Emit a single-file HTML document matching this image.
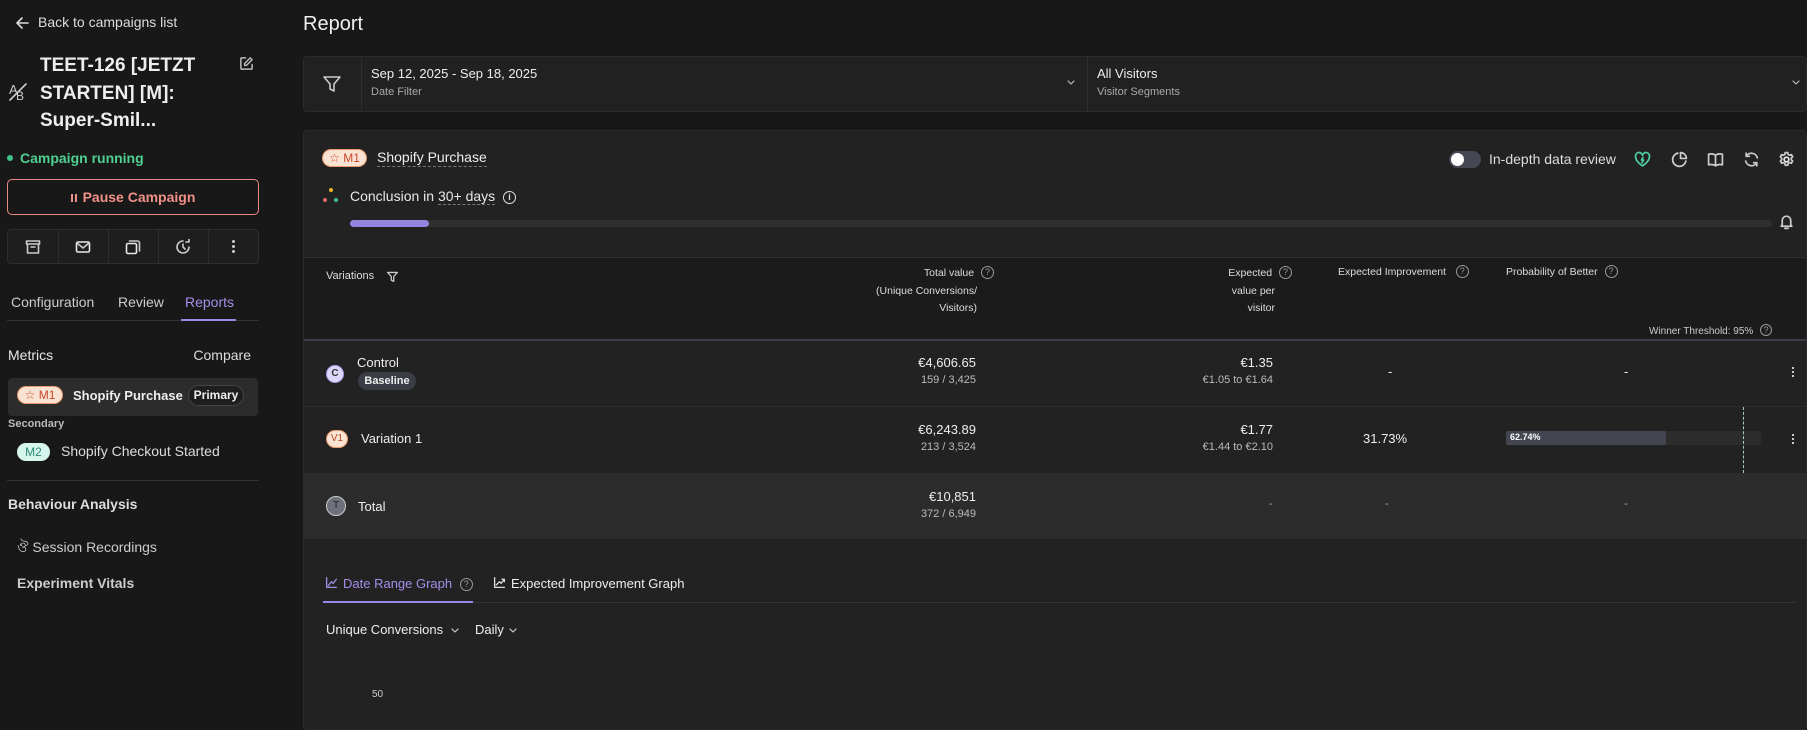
<!DOCTYPE html>
<html><head><meta charset="utf-8"><style>
*{box-sizing:border-box;margin:0;padding:0}
body{width:1807px;height:698px;overflow:hidden;background:#181818;font-family:"Liberation Sans",sans-serif;color:#e8e8e8;position:relative;font-size:14px}
.a{position:absolute;white-space:nowrap}
svg{position:absolute;fill:none;stroke:currentColor;stroke-width:1.6;stroke-linecap:round;stroke-linejoin:round}
.q{display:inline-block;width:13px;height:13px;border:1px solid #999;border-radius:50%;font-size:9px;text-align:center;line-height:11px;color:#999;vertical-align:1px;margin-left:4px}
.r{text-align:right}
</style></head><body>
<!-- sidebar -->
<svg style="left:15px;top:15px" width="16" height="16" viewBox="0 0 16 16"><path d="M13 8H3M7 3L2 8l5 5" color="#ddd"/></svg>
<div class="a" style="left:38px;top:14px;font-size:14px;color:#ddd">Back to campaigns list</div>
<div class="a" style="left:9px;top:82px;font-size:13px;color:#ccc">A</div>
<svg style="left:8px;top:82px" width="20" height="20" viewBox="0 0 20 20"><path d="M2 18L18 2" color="#ccc"/></svg>
<div class="a" style="left:16px;top:89px;font-size:12px;color:#ccc">B</div>
<div class="a" style="left:40px;top:52px;font-size:19px;font-weight:bold;line-height:27.5px;color:#eee">TEET-126 [JETZT<br>STARTEN] [M]:<br>Super-Smil...</div>
<svg style="left:239px;top:56px" width="15" height="15" viewBox="0 0 16 16"><path d="M7 2H3a1 1 0 0 0-1 1v10a1 1 0 0 0 1 1h10a1 1 0 0 0 1-1V9M12 2l2 2-6 6H6V8z" color="#bbb"/></svg>
<div class="a" style="left:7px;top:155px;width:6px;height:6px;border-radius:50%;background:#3cc587"></div>
<div class="a" style="left:20px;top:150px;font-size:14px;font-weight:bold;color:#4fd08f">Campaign running</div>
<div class="a" style="left:7px;top:179px;width:252px;height:36px;border:1px solid #e88a80;border-radius:5px;color:#f09086;font-size:14px;font-weight:bold;text-align:center;line-height:34px"><span style="display:inline-block;width:2px;height:8px;background:#f09086;margin-right:2px"></span><span style="display:inline-block;width:2px;height:8px;background:#f09086;margin-right:6px"></span>Pause Campaign</div>
<div class="a" style="left:7px;top:229px;width:252px;height:35px;border:1px solid #2e2e2e;border-radius:4px;background:#1e1e1e"></div>
<div class="a" style="left:58px;top:230px;width:1px;height:33px;background:#2e2e2e"></div>
<div class="a" style="left:108px;top:230px;width:1px;height:33px;background:#2e2e2e"></div>
<div class="a" style="left:158px;top:230px;width:1px;height:33px;background:#2e2e2e"></div>
<div class="a" style="left:208px;top:230px;width:1px;height:33px;background:#2e2e2e"></div>
<svg style="left:25px;top:239px" width="16" height="16" viewBox="0 0 16 16"><path d="M1.5 2h13v3h-13zM2.5 5v9h11V5M6 8h4" color="#ccc"/></svg>
<svg style="left:75px;top:239px" width="16" height="16" viewBox="0 0 16 16"><rect x="1.5" y="3" width="13" height="10" rx="1.5"/><path d="M2 4l6 5 6-5" color="#ccc"/></svg>
<svg style="left:125px;top:239px" width="16" height="16" viewBox="0 0 16 16"><rect x="1.5" y="4.5" width="10" height="10" rx="1.5"/><path d="M4.5 2h8a2 2 0 0 1 2 2v8" color="#ccc"/></svg>
<svg style="left:175px;top:239px" width="16" height="16" viewBox="0 0 16 16"><path d="M14 8A6 6 0 1 1 8 2M8 5v3l2 2M11 3l3 0 0-3" color="#ccc"/></svg>
<div class="a" style="left:232px;top:240px;width:3px;height:3px;border-radius:50%;background:#ccc"></div>
<div class="a" style="left:232px;top:245px;width:3px;height:3px;border-radius:50%;background:#ccc"></div>
<div class="a" style="left:232px;top:250px;width:3px;height:3px;border-radius:50%;background:#ccc"></div>
<div class="a" style="left:11px;top:294px;font-size:14px;color:#ccc">Configuration</div>
<div class="a" style="left:118px;top:294px;font-size:14px;color:#ccc">Review</div>
<div class="a" style="left:185px;top:294px;font-size:14px;color:#a58ee8">Reports</div>
<div class="a" style="left:7px;top:320px;width:252px;height:1px;background:#333"></div>
<div class="a" style="left:181px;top:319px;width:55px;height:2px;background:#9b87e6"></div>
<div class="a" style="left:8px;top:347px;font-size:14px;color:#e8e8e8">Metrics</div>
<div class="a r" style="left:150px;top:347px;width:101px;font-size:14px;color:#ddd">Compare</div>
<div class="a" style="left:8px;top:378px;width:250px;height:38px;background:#2c2c2c;border-radius:4px"></div>
<div class="a" style="left:17px;top:386px;width:46px;height:18px;border-radius:9px;background:#fbe3d4;border:1px solid #e99a6c;color:#c8482e;font-size:12px;text-align:center;line-height:16px">☆ M1</div>
<div class="a" style="left:73px;top:388px;font-size:13px;font-weight:bold;color:#eee">Shopify Purchase</div>
<div class="a" style="left:188px;top:385px;width:56px;height:21px;border-radius:11px;background:#1e1e1e;border:1px solid #444;color:#eee;font-size:12px;font-weight:bold;text-align:center;line-height:19px">Primary</div>
<div class="a" style="left:8px;top:418px;font-size:11px;color:#bbb;font-weight:bold">Secondary</div>
<div class="a" style="left:17px;top:443px;width:33px;height:18px;border-radius:9px;background:#d6f5ec;color:#2a8a72;font-size:12px;text-align:center;line-height:18px">M2</div>
<div class="a" style="left:61px;top:443px;font-size:14px;color:#ddd">Shopify Checkout Started</div>
<div class="a" style="left:7px;top:480px;width:252px;height:1px;background:#333"></div>
<div class="a" style="left:8px;top:496px;font-size:14px;font-weight:bold;color:#ddd">Behaviour Analysis</div>
<div class="a" style="left:17px;top:536px;font-size:14px;color:#ccc">ঔ Session Recordings</div>
<div class="a" style="left:17px;top:575px;font-size:14px;font-weight:bold;color:#ccc">Experiment Vitals</div>
<!-- main -->
<div class="a" style="left:303px;top:13px;font-size:20px;color:#f0f0f0">Report</div>
<div class="a" style="left:303px;top:56px;width:1504px;height:56px;background:#212121;border:1px solid #2c2c2c;border-radius:4px"></div>
<div class="a" style="left:361px;top:57px;width:1px;height:54px;background:#2e2e2e"></div>
<div class="a" style="left:1087px;top:57px;width:1px;height:54px;background:#2e2e2e"></div>
<svg style="left:322px;top:74px" width="20" height="20" viewBox="0 0 20 20"><path d="M2 3h16l-6 7v7l-4-2v-5z" color="#ccc"/></svg>
<div class="a" style="left:371px;top:66px;font-size:13px;color:#eee">Sep 12, 2025 - Sep 18, 2025</div>
<div class="a" style="left:371px;top:86px;font-size:11px;color:#aaa">Date Filter</div>
<svg style="left:1067px;top:80px" width="8" height="6" viewBox="0 0 8 6"><path d="M1 1l3 3 3-3" color="#bbb" style="stroke-width:1.2"/></svg>
<div class="a" style="left:1097px;top:66px;font-size:13px;color:#eee">All Visitors</div>
<div class="a" style="left:1097px;top:86px;font-size:11px;color:#aaa">Visitor Segments</div>
<svg style="left:1792px;top:80px" width="8" height="6" viewBox="0 0 8 6"><path d="M1 1l3 3 3-3" color="#bbb" style="stroke-width:1.2"/></svg>
<!-- card -->
<div class="a" style="left:303px;top:130px;width:1504px;height:600px;background:#222;border:1px solid #2c2c2c;border-radius:4px"></div>
<div class="a" style="left:322px;top:149px;width:45px;height:18px;border-radius:9px;background:#fbe3d4;border:1px solid #e99a6c;color:#c8482e;font-size:12px;text-align:center;line-height:16px">☆ M1</div>
<div class="a" style="left:377px;top:149px;font-size:14px;color:#eee;border-bottom:1px dashed #777;padding-bottom:1px">Shopify Purchase</div>
<div class="a" style="left:1449px;top:151px;width:32px;height:17px;border-radius:9px;background:#454852"></div>
<div class="a" style="left:1451px;top:153px;width:13px;height:13px;border-radius:50%;background:#fff"></div>
<div class="a" style="left:1489px;top:151px;font-size:14px;color:#ddd">In-depth data review</div>
<svg style="left:1634px;top:151px" width="17" height="17" viewBox="0 0 16 16"><path d="M8 14S1.5 10 1.5 5.5A3.3 3.3 0 0 1 8 4a3.3 3.3 0 0 1 6.5 1.5C14.5 10 8 14 8 14zM8.5 6L7 8.5h2L7.5 11" color="#4fd0a0"/></svg>
<svg style="left:1671px;top:151px" width="17" height="17" viewBox="0 0 16 16"><path d="M14 9.5A6.3 6.3 0 1 1 6.5 2M9 1.5a5.5 5.5 0 0 1 5.5 5.5H9z" color="#ccc"/></svg>
<svg style="left:1707px;top:151px" width="17" height="17" viewBox="0 0 16 16"><path d="M8 4v10M8 4C6 2.5 3.5 2.5 1.5 3v10c2-.5 4.5-.5 6.5 1 2-1.5 4.5-1.5 6.5-1V3c-2-.5-4.5-.5-6.5 1" color="#ccc"/></svg>
<svg style="left:1743px;top:151px" width="17" height="17" viewBox="0 0 16 16"><path d="M13.5 6.5A5.7 5.7 0 0 0 3 5M2.5 9.5A5.7 5.7 0 0 0 13 11M3 2v3h3M13 14v-3h-3" color="#ccc"/></svg>
<svg style="left:1778px;top:151px" width="17" height="17" viewBox="0 0 16 16"><circle cx="8" cy="8" r="2.2"/><path d="M6.8 1.5h2.4l.4 1.8 1.3.7 1.7-.6 1.2 2-1.3 1.3v1.5l1.3 1.3-1.2 2-1.7-.6-1.3.7-.4 1.8H6.8l-.4-1.8-1.3-.7-1.7.6-1.2-2 1.3-1.3V6.7L2.2 5.4l1.2-2 1.7.6 1.3-.7z" color="#ccc"/></svg>
<div class="a" style="left:329px;top:188px;width:4px;height:4px;border-radius:50%;background:#f0b429"></div>
<div class="a" style="left:323px;top:198px;width:4px;height:4px;border-radius:50%;background:#e46a6a"></div>
<div class="a" style="left:334px;top:198px;width:4px;height:4px;border-radius:50%;background:#3cc587"></div>
<div class="a" style="left:350px;top:188px;font-size:14px;color:#e8e8e8">Conclusion in <span style="border-bottom:1px dashed #777">30+ days</span> <span class="q" style="border-color:#ddd;color:#ddd;font-weight:bold">i</span></div>
<div class="a" style="left:350px;top:220px;width:1422px;height:7px;border-radius:4px;background:#2f2f2f"></div>
<div class="a" style="left:350px;top:220px;width:79px;height:7px;border-radius:4px;background:#9483df"></div>
<svg style="left:1778px;top:213px" width="17" height="17" viewBox="0 0 16 16"><path d="M4 11V7a4 4 0 0 1 8 0v4l1 1.5H3zM6.5 14.5h3" color="#ccc"/></svg>
<!-- table header -->
<div class="a" style="left:304px;top:257px;width:1502px;height:83px;background:#1b1b1b;border-top:1px solid #2e2e2e"></div>
<div class="a" style="left:326px;top:270px;font-size:11px;color:#ddd">Variations</div>
<svg style="left:386px;top:270px" width="13" height="13" viewBox="0 0 16 16"><path d="M2 3h12l-4.5 5v6l-3-1.5V8z" color="#ccc"/></svg>
<div class="a r" style="left:800px;top:265px;width:194px;font-size:10.5px;color:#ddd;line-height:17.5px">Total value <span class="q">?</span><br>(Unique Conversions/<span style="display:inline-block;width:17px"></span><br>Visitors)<span style="display:inline-block;width:17px"></span></div>
<div class="a r" style="left:1150px;top:265px;width:142px;font-size:10.5px;color:#ddd;line-height:17.5px">Expected <span class="q">?</span><br>value per<span style="display:inline-block;width:17px"></span><br>visitor<span style="display:inline-block;width:17px"></span></div>
<div class="a" style="left:1338px;top:265px;font-size:10.5px;color:#ddd">Expected Improvement &nbsp;<span class="q">?</span></div>
<div class="a" style="left:1506px;top:265px;font-size:10.5px;color:#ddd">Probability of Better <span class="q">?</span></div>
<div class="a" style="left:1649px;top:324px;font-size:10px;color:#ccc">Winner Threshold: 95% <span class="q" style="width:12px;height:12px;line-height:10px">?</span></div>
<div class="a" style="left:304px;top:339px;width:1502px;height:2px;background:#3a3d45"></div>
<!-- rows -->
<div class="a" style="left:304px;top:406px;width:1502px;height:1px;background:#2e2e2e"></div>
<div class="a" style="left:304px;top:473px;width:1502px;height:66px;background:#2c2c2c"></div>
<div class="a" style="left:326px;top:365px;width:18px;height:18px;border-radius:50%;background:#ddd6fb;border:1px solid #a99be8;color:#333;font-size:10px;font-weight:bold;text-align:center;line-height:16px">C</div>
<div class="a" style="left:357px;top:355px;font-size:13px;color:#eee">Control</div>
<div class="a" style="left:358px;top:372px;width:58px;height:18px;border-radius:9px;background:#3a3d45;color:#eee;font-size:11px;font-weight:bold;text-align:center;line-height:18px">Baseline</div>
<div class="a r" style="left:800px;top:355px;width:176px;font-size:13px;color:#eee">€4,606.65</div>
<div class="a r" style="left:800px;top:374px;width:176px;font-size:11px;color:#bbb">159 / 3,425</div>
<div class="a r" style="left:1100px;top:355px;width:173px;font-size:13px;color:#eee">€1.35</div>
<div class="a r" style="left:1100px;top:374px;width:173px;font-size:11px;color:#bbb">€1.05 to €1.64</div>
<div class="a" style="left:1388px;top:364px;font-size:13px;color:#eee">-</div>
<div class="a" style="left:1624px;top:364px;font-size:13px;color:#eee">-</div>
<div class="a" style="left:1792px;top:367px;width:2px;height:2px;background:#ccc"></div>
<div class="a" style="left:1792px;top:371px;width:2px;height:2px;background:#ccc"></div>
<div class="a" style="left:1792px;top:375px;width:2px;height:2px;background:#ccc"></div>

<div class="a" style="left:326px;top:430px;width:22px;height:18px;border-radius:9px;background:#fbe3d4;border:1px solid #e99a6c;color:#b54a24;font-size:10px;text-align:center;line-height:16px">V1</div>
<div class="a" style="left:361px;top:431px;font-size:13px;color:#eee">Variation 1</div>
<div class="a r" style="left:800px;top:422px;width:176px;font-size:13px;color:#eee">€6,243.89</div>
<div class="a r" style="left:800px;top:441px;width:176px;font-size:11px;color:#bbb">213 / 3,524</div>
<div class="a r" style="left:1100px;top:422px;width:173px;font-size:13px;color:#eee">€1.77</div>
<div class="a r" style="left:1100px;top:441px;width:173px;font-size:11px;color:#bbb">€1.44 to €2.10</div>
<div class="a" style="left:1363px;top:431px;font-size:13px;color:#eee">31.73%</div>
<div class="a" style="left:1506px;top:431px;width:255px;height:14px;background:#2c2c2c;border-radius:2px"></div>
<div class="a" style="left:1506px;top:431px;width:160px;height:14px;background:#434650;border-radius:2px"></div>
<div class="a" style="left:1510px;top:432px;font-size:9px;font-weight:bold;color:#fff">62.74%</div>
<div class="a" style="left:1743px;top:407px;height:66px;border-left:1px dashed #9fcfc0"></div>
<div class="a" style="left:1792px;top:434px;width:2px;height:2px;background:#ccc"></div>
<div class="a" style="left:1792px;top:438px;width:2px;height:2px;background:#ccc"></div>
<div class="a" style="left:1792px;top:442px;width:2px;height:2px;background:#ccc"></div>

<div class="a" style="left:326px;top:496px;width:20px;height:20px;border-radius:50%;background:#6e717a;border:1px solid #ccc;color:#222;font-size:10px;text-align:center;line-height:18px">T</div>
<div class="a" style="left:358px;top:499px;font-size:13px;color:#eee">Total</div>
<div class="a r" style="left:800px;top:489px;width:176px;font-size:13px;color:#eee">€10,851</div>
<div class="a r" style="left:800px;top:508px;width:176px;font-size:11px;color:#bbb">372 / 6,949</div>
<div class="a" style="left:1269px;top:498px;font-size:11px;color:#aaa">-</div>
<div class="a" style="left:1385px;top:498px;font-size:11px;color:#aaa">-</div>
<div class="a" style="left:1624px;top:498px;font-size:11px;color:#aaa">-</div>
<!-- graph tabs -->
<div class="a" style="left:323px;top:602px;width:1473px;height:1px;background:#333"></div>
<div class="a" style="left:323px;top:601px;width:150px;height:2px;background:#9b87e6"></div>
<svg style="left:325px;top:576px" width="13" height="13" viewBox="0 0 16 16"><path d="M2 2v12h12M4 12l4-5 2 2 4-5" color="#a58ee8"/></svg>
<div class="a" style="left:343px;top:576px;font-size:13px;color:#a58ee8">Date Range Graph <span class="q">?</span></div>
<svg style="left:493px;top:576px" width="13" height="13" viewBox="0 0 16 16"><path d="M2 2v12h12M4 11l4-4 2 2 4-5M11 4h3v3" color="#ddd"/></svg>
<div class="a" style="left:511px;top:576px;font-size:13px;color:#eee">Expected Improvement Graph</div>
<div class="a" style="left:326px;top:622px;font-size:13px;color:#eee">Unique Conversions</div>
<svg style="left:451px;top:628px" width="8" height="6" viewBox="0 0 8 6"><path d="M1 1l3 3 3-3" color="#ccc" style="stroke-width:1.2"/></svg>
<div class="a" style="left:475px;top:622px;font-size:13px;color:#eee">Daily</div>
<svg style="left:509px;top:628px" width="8" height="6" viewBox="0 0 8 6"><path d="M1 1l3 3 3-3" color="#ccc" style="stroke-width:1.2"/></svg>
<div class="a" style="left:372px;top:689px;font-size:10px;color:#ccc">50</div>
</body></html>
